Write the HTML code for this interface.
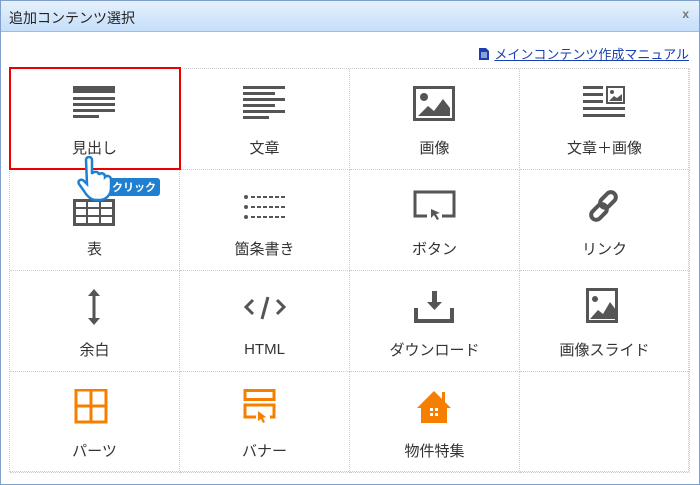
<!DOCTYPE html>
<html><head><meta charset="utf-8"><style>
*{margin:0;padding:0;box-sizing:border-box}
body{width:700px;height:485px;background:#fff;font-family:"Liberation Sans","Noto Sans CJK JP",sans-serif;position:relative;overflow:hidden}
.frame{position:absolute;left:0;top:0;width:700px;height:485px;border:1px solid #7f9fcc;}
.title{position:absolute;left:1px;top:1px;width:698px;height:31px;background:linear-gradient(#e6f1fc,#c5defa);border-bottom:1px solid #9fbde0;font-size:14px;color:#222;padding:7px 0 0 8px}
.x{position:absolute;right:10px;top:6px;font-size:12px;color:#777;font-weight:bold}
.link{position:absolute;right:11px;top:44px;font-size:13px;color:#1a3fb0;text-decoration:underline}
.grid{position:absolute;left:9px;top:68px;width:680px;height:404px;border:1px dotted #ccc}
.c{position:absolute;width:170px;height:101px;border-right:1px dotted #ccc;border-bottom:1px dotted #ccc}
.c svg{position:absolute;left:63px;top:17px}
.c span{position:absolute;left:0;right:0;top:68px;text-align:center;font-size:15px;color:#333}
.red{position:absolute;left:9px;top:67px;width:172px;height:103px;border:2px solid #e00}
</style></head><body>
<div class="frame"></div>
<div class="title">追加コンテンツ選択<span class="x">x</span></div>
<div class="link"><svg width="10" height="12" style="vertical-align:-1px;margin-right:5px"><path d="M0 0h7l3 3v9H0z" fill="#1a3fb0"/><path d="M2 5h6M2 7h6M2 9h6" stroke="#fff"/></svg>メインコンテンツ作成マニュアル</div>
<div class="grid">
<div class="c" style="left:0;top:0"><svg width="44" height="40"><rect x="0" y="0" width="42" height="7" fill="#555"/><rect x="0" y="11" width="42" height="3" fill="#555"/><rect x="0" y="17" width="42" height="3" fill="#555"/><rect x="0" y="23" width="42" height="3" fill="#555"/><rect x="0" y="29" width="26" height="3" fill="#555"/></svg><span>見出し</span></div>
<div class="c" style="left:170px;top:0"><svg width="44" height="40"><g fill="#555"><rect y="0" width="42" height="3"/><rect y="6" width="32" height="3"/><rect y="12" width="42" height="3"/><rect y="18" width="32" height="3"/><rect y="24" width="42" height="3"/><rect y="30" width="26" height="3"/></g></svg><span>文章</span></div>
<div class="c" style="left:340px;top:0"><svg width="44" height="40"><rect x="1.5" y="1.5" width="39" height="32" fill="none" stroke="#555" stroke-width="3"/><circle cx="11" cy="11" r="4" fill="#555"/><path d="M5 30l10-10 6 5 9-12 7 9v8z" fill="#555"/></svg><span>画像</span></div>
<div class="c" style="left:510px;top:0"><svg width="44" height="40"><g fill="#555"><rect y="0" width="20" height="3"/><rect y="7" width="20" height="3"/><rect y="14" width="20" height="3"/><rect y="21" width="42" height="3"/><rect y="28" width="42" height="3"/></g><rect x="24" y="1" width="17" height="16" fill="none" stroke="#555" stroke-width="2"/><path d="M26 15l5-5 3 2 5-4v7z" fill="#555"/><circle cx="29" cy="6" r="2" fill="#555"/></svg><span>文章＋画像</span></div>
<div class="c" style="left:0;top:101px"><svg width="44" height="40"><rect x="1.5" y="13.5" width="39" height="24" fill="none" stroke="#555" stroke-width="3"/><path d="M1 21h40M1 29h40M14 13v25M27 13v25" stroke="#555" stroke-width="2"/></svg><span>表</span></div>
<div class="c" style="left:170px;top:101px"><svg width="44" height="40"><g fill="#555"><circle cx="3" cy="10" r="2"/><circle cx="3" cy="20" r="2"/><circle cx="3" cy="30" r="2"/></g><path d="M8 10h34M8 20h34M8 30h34" stroke="#555" stroke-width="2" stroke-dasharray="4 2"/></svg><span>箇条書き</span></div>
<div class="c" style="left:340px;top:101px"><svg width="44" height="40"><path d="M14 29H2V5h39v24H29" fill="none" stroke="#555" stroke-width="3"/><path d="M18 22l9 4-4 1 3 5-2 1-3-5-3 3z" fill="#555"/></svg><span>ボタン</span></div>
<div class="c" style="left:510px;top:101px"><svg width="44" height="40"><g fill="none" stroke="#555" stroke-width="4"><rect x="20" y="4" width="10" height="18" rx="5" transform="rotate(45 25 13)"/><rect x="11" y="16" width="10" height="18" rx="5" transform="rotate(45 16 25)"/></g></svg><span>リンク</span></div>
<div class="c" style="left:0;top:202px"><svg width="44" height="40"><path d="M21 5v28" stroke="#555" stroke-width="3"/><path d="M15 8l6-7 6 7zM15 30l6 7 6-7z" fill="#555"/></svg><span>余白</span></div>
<div class="c" style="left:170px;top:202px"><svg width="44" height="40"><path d="M10 12l-7 7 7 7M34 12l7 7-7 7M25 9l-6 22" fill="none" stroke="#555" stroke-width="3"/></svg><span style="top:70px">HTML</span></div>
<div class="c" style="left:340px;top:202px"><svg width="44" height="40"><path d="M3 20v13h36V20" fill="none" stroke="#555" stroke-width="4"/><path d="M19 3h5v11h5l-7.5 8-7.5-8h5z" fill="#555"/></svg><span>ダウンロード</span></div>
<div class="c" style="left:510px;top:202px"><svg width="44" height="40"><rect x="1.5" y="1.5" width="29" height="32" transform="translate(3 0)" fill="none" stroke="#555" stroke-width="3"/><circle cx="12" cy="11" r="3" fill="#555"/><path d="M7 31l8-9 5 4 7-12 6 8v9z" fill="#555"/></svg><span>画像スライド</span></div>
<div class="c" style="left:0;top:303px"><svg width="44" height="40"><rect x="2" y="1" width="30" height="32" fill="none" stroke="#f77f00" stroke-width="3" transform="translate(1 0)"/><path d="M18 1v32M3 17h31" stroke="#f77f00" stroke-width="3"/></svg><span>パーツ</span></div>
<div class="c" style="left:170px;top:303px"><svg width="44" height="40"><rect x="2" y="1.5" width="29" height="9" fill="none" stroke="#f77f00" stroke-width="3"/><path d="M13 28H2V16h29v12h-4" fill="none" stroke="#f77f00" stroke-width="3"/><path d="M15 22l8 6-3 1 2 4-2 1-2-4-3 2z" fill="#f77f00"/></svg><span>バナー</span></div>
<div class="c" style="left:340px;top:303px"><svg width="44" height="40"><path d="M4 19L21 2l8 8V3h3v10l6 6h-4v15H8V19z" fill="#f77f00"/><g fill="#fff"><rect x="17" y="19" width="3" height="3"/><rect x="22" y="19" width="3" height="3"/><rect x="17" y="24" width="3" height="3"/><rect x="22" y="24" width="3" height="3"/></g></svg><span>物件特集</span></div>
<div class="c" style="left:510px;top:303px"></div>
</div>
<div class="red"></div>
<div style="position:absolute;left:108px;top:178px;background:#1f7fd0;color:#fff;font-size:11px;font-weight:bold;padding:1px 4px;border-radius:3px">クリック</div>
<svg style="position:absolute;left:76px;top:156px" width="40" height="46"><path d="M10 4c0-4 6-4 6 0v14c1-3 7-3 7 1 1-3 6-2 6 2 2-2 6-1 6 3v8c0 7-5 12-12 12h-3c-5 0-9-4-12-9l-5-7c-2-3 2-6 5-3l3 3z" fill="#fff" stroke="#1f7fd0" stroke-width="2.5"/></svg>
</body></html>
